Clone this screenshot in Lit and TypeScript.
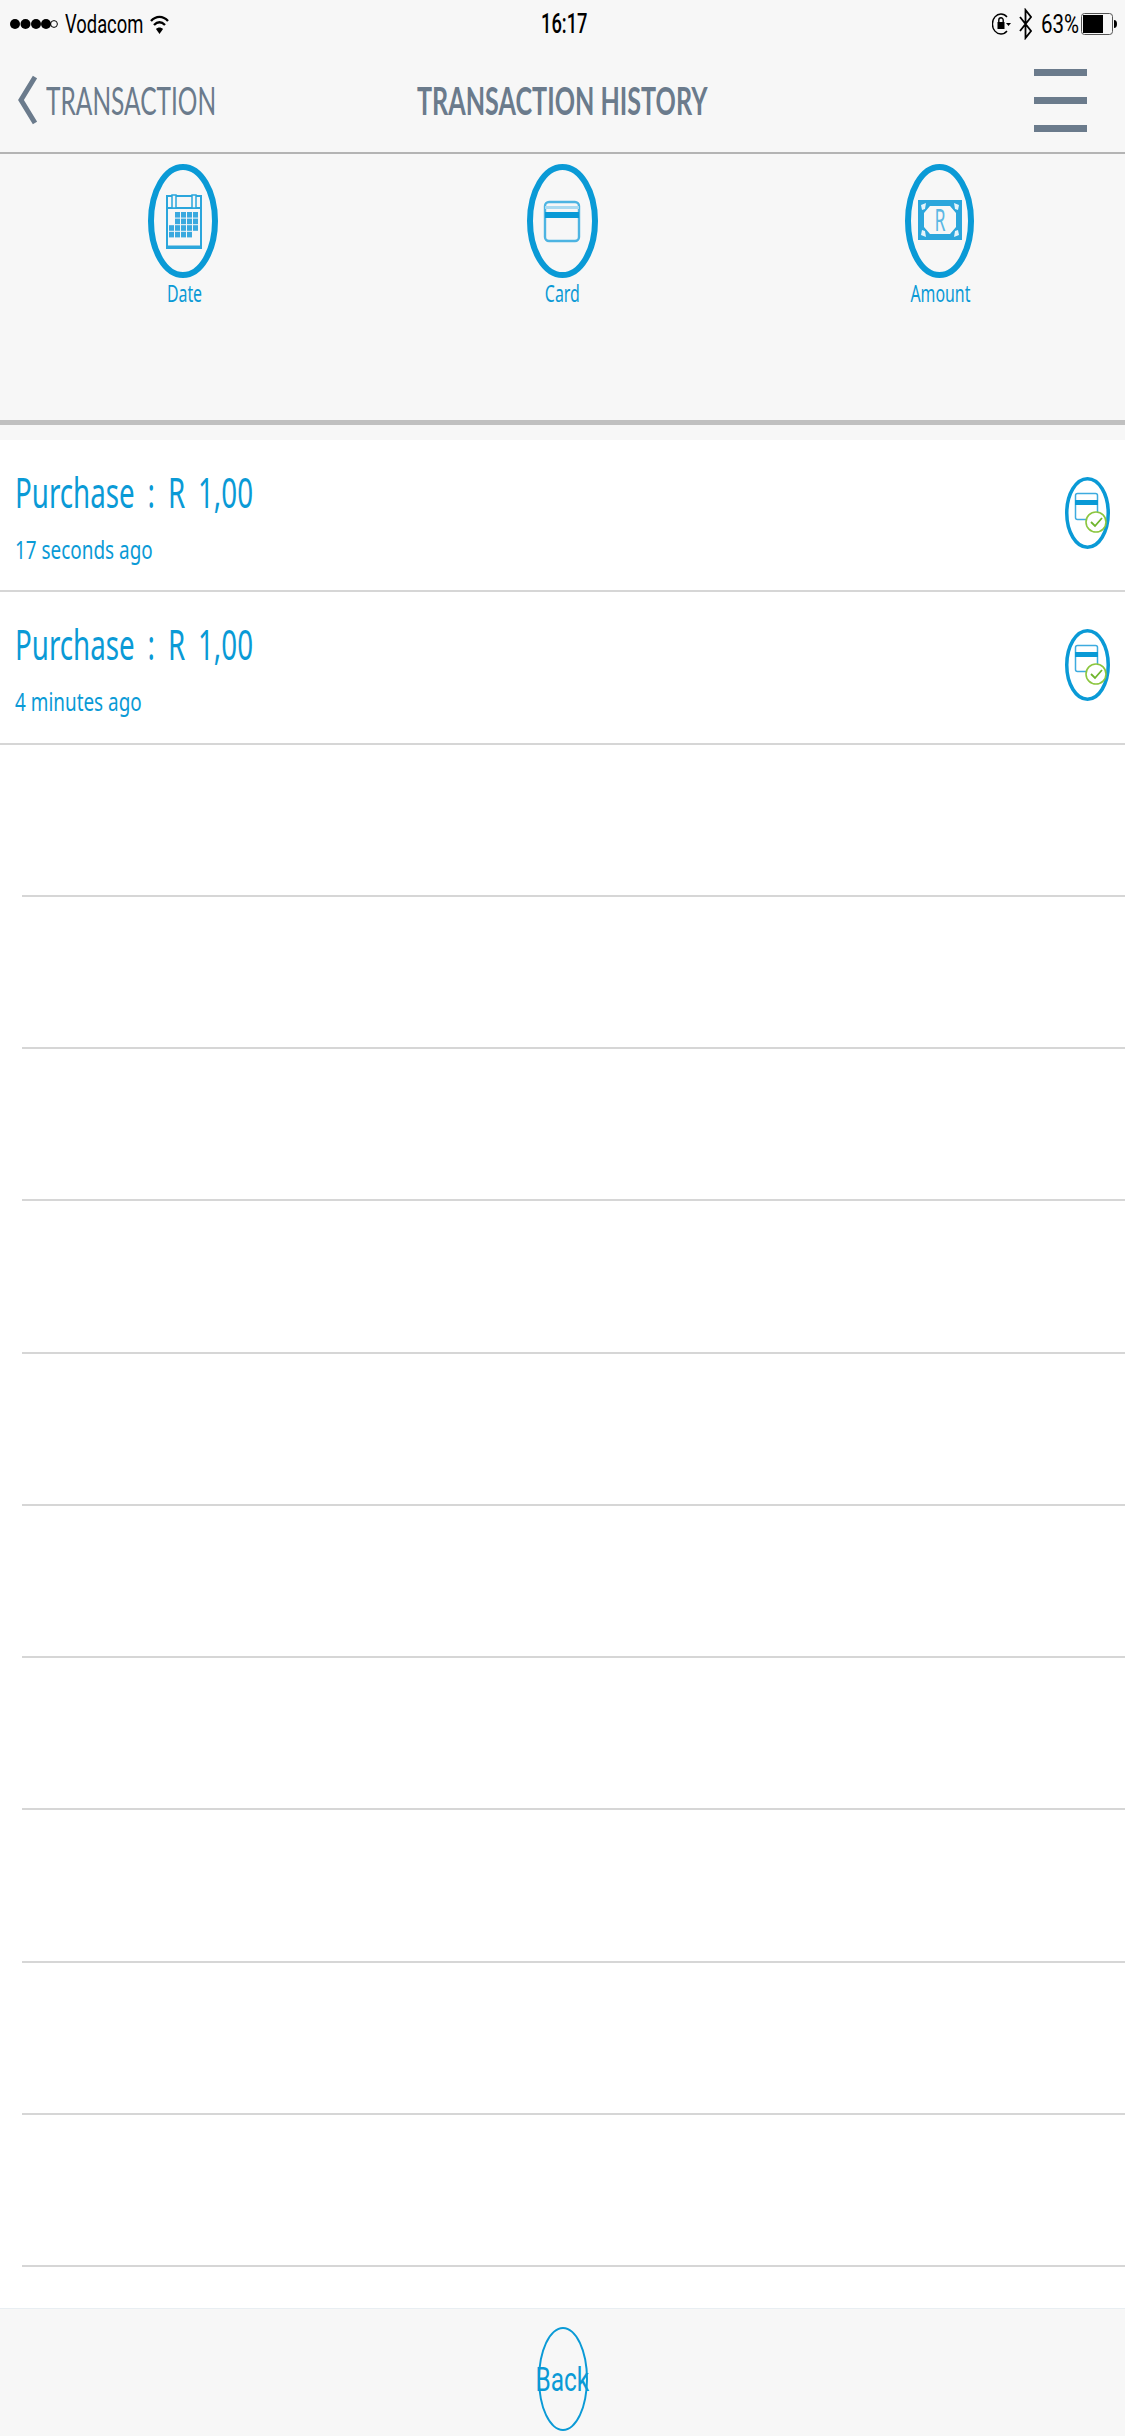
import { LitElement, html, css, svg } from 'lit'
import { customElement } from 'lit/decorators.js'

const ring = (w: number, h: number, sw: number) =>
  svg`<ellipse cx=${w / 2} cy=${h / 2} rx=${w / 2 - sw / 2} ry=${h / 2 - sw / 2} fill="none" stroke="#0a9ad6" stroke-width=${sw}/>`

function calendarIcon() {
  const dots = []
  for (let r = 0; r < 4; r++) {
    for (let c = 0; c < 5; c++) {
      if (r < 2 && c === 0) continue
      if (r === 3 && c === 4) continue
      dots.push(svg`<rect x=${21 + c * 6} y=${48 + r * 6.6} width="5" height="5.6" fill="#3aa9df"/>`)
    }
  }
  return html`<svg class="off" width="70" height="114" viewBox="0 0 70 114">
    ${ring(70, 114, 6)}
    <rect x="19" y="32" width="34" height="52" fill="none" stroke="#2ba6dc" stroke-width="2"/>
    <line x1="19" y1="44" x2="53" y2="44" stroke="#2ba6dc" stroke-width="2"/>
    <line x1="19" y1="83" x2="53" y2="83" stroke="#2ba6dc" stroke-width="3"/>
    <rect x="24" y="31" width="4" height="13" fill="#f7f7f7" stroke="#2ba6dc" stroke-width="1.5"/>
    <rect x="44" y="31" width="4" height="13" fill="#f7f7f7" stroke="#2ba6dc" stroke-width="1.5"/>
    ${dots}
  </svg>`
}

function cardIcon() {
  return html`<svg width="71" height="114" viewBox="0 0 71 114">
    ${ring(71, 114, 6)}
    <rect x="18" y="38" width="34" height="39" rx="4" fill="none" stroke="#4db4e2" stroke-width="2.4"/>
    <rect x="18" y="42" width="34" height="3" fill="#a9daf1"/>
    <rect x="18" y="48" width="34" height="6" fill="#0a9ad6"/>
  </svg>`
}

function amountIcon() {
  return html`<svg class="off" width="69" height="114" viewBox="0 0 69 114">
    ${ring(69, 114, 6)}
    <path fill-rule="evenodd" fill="#2ba6dc" d="M13 36h44v40H13z M25 42h20l6 7v14l-6 7H25l-6-7V49z"/>
    <path fill="#e4f4fb" d="M16 41l5-2-1 6-3 1z M54 41l-5-2 1 6 3 1z M16 71l5 2-1-6-3-1z M54 71l-5 2 1-6 3-1z"/>
    <text x="35" y="67" text-anchor="middle" class="note" textLength="11" lengthAdjust="spacingAndGlyphs">R</text>
  </svg>`
}

function rowIcon() {
  return html`<svg width="45" height="72" viewBox="0 0 45 72">
    ${ring(45, 72, 3.5)}
    <rect x="10.500" y="16.500" width="22" height="26" rx="2" fill="none" stroke="#3dabdf" stroke-width="1.500"/>
    <rect x="10" y="23" width="23" height="5" fill="#0a9ad6"/>
    <circle cx="31" cy="45" r="10" fill="#fff" stroke="#8cc63f" stroke-width="1.600"/>
    <path d="M26 45l4 4 7-8" fill="none" stroke="#6fb52c" stroke-width="1.800"/>
  </svg>`
}

@customElement('app-root')
export class AppRoot extends LitElement {
  static styles = css`
    :host {
      display: flex;
      flex-direction: column;
      width: 1125px;
      height: 2436px;
      overflow: hidden;
      background: #fff;
      font-family: 'Noto Sans', sans-serif;
      color: #0a9ad6;
    }
    .squeeze {
      display: inline-block;
      white-space: nowrap;
      transform-origin: left center;
    }
    .top {
      background: #f7f7f7;
      border-bottom: 2px solid #b4b4b4;
      height: 152px;
      flex: none;
    }
    .status {
      height: 48px;
      padding: 0 8px 0 10px;
      display: grid;
      grid-template-columns: minmax(0, 1fr) auto minmax(0, 1fr);
      align-items: center;
      color: #000;
      font-family: 'Roboto', sans-serif;
      font-size: 25px;
    }
    .status-left, .status-right {
      display: flex;
      align-items: center;
    }
    .status-right { justify-content: flex-end; }
    .carrier { transform: scaleX(0.735); width: 76px; margin-left: 7px; }
    .wifi { margin-left: 9px; }
    .time { transform: scaleX(0.68); transform-origin: center; font-size: 27px; font-weight: 500; margin-left: 1px; }
    .pct { transform: scaleX(0.82); width: 36px; margin-left: 9px; }
    .bt { margin-left: 8px; }
    .batt { margin-left: 4px; }
    .nav {
      display: grid;
      grid-template-columns: minmax(0, 1fr) auto minmax(0, 1fr);
      align-items: center;
      height: 104px;
      padding: 0 38px 8px 38px;
      color: #6b7b8c;
      font-family: 'Lato', sans-serif;
      font-size: 39px;
    }
    .back {
      display: flex;
      align-items: center;
      gap: 9px;
      margin-left: -21px;
    }
    .back .squeeze { transform: scaleX(0.628); }
    .title { transform: scaleX(0.645); transform-origin: center; font-weight: 700; }
    .menu {
      justify-self: end;
      width: 53px;
      display: flex;
      flex-direction: column;
      gap: 21px;
    }
    .menu i {
      display: block;
      height: 7px;
      background: #6b7b8c;
    }
    .tools {
      flex: none;
      height: 256px;
      background: #f7f7f7;
      display: grid;
      grid-template-columns: repeat(3, 378px);
      justify-content: center;
      padding-top: 10px;
      border-bottom: 5px solid #c0c0c0;
    }
    .tool {
      display: flex;
      flex-direction: column;
      align-items: center;
      font-size: 23px;
      line-height: 30px;
    }
    .tool svg { display: block; }
    .tool svg.off { margin-right: 3px; }
    .tool span {
      display: block;
      transform: scaleX(0.69);
    }
    .note {
      font-family: 'Noto Sans', sans-serif;
      font-size: 30px;
      fill: #5bb8e4;
    }
    .gap {
      flex: none;
      height: 15px;
      background: #f7f7f7;
    }
    .list { flex: 1; overflow: hidden; min-height: 0; }
    .row {
      height: 152.25px;
      box-sizing: border-box;
      border-bottom: 2px solid #d6d6d6;
      display: flex;
      align-items: center;
      justify-content: space-between;
      padding: 0 15px 0 15px;
    }
    .row.empty { margin-left: 22px; padding: 0; }
    .row-text { display: flex; flex-direction: column; }
    .amount {
      font-size: 42px;
      line-height: 56px;
      transform: scaleX(0.66);
      word-spacing: 8.6px;
    }
    .when {
      font-size: 26px;
      line-height: 36px;
      margin-top: 11px;
      transform: scaleX(0.727);
    }
    .row svg { display: block; margin-bottom: 4px; }
    .foot {
      flex: none;
      height: 128px;
      background: #f7f7f7;
      border-top: 1px solid #e8eef2;
      display: flex;
      justify-content: center;
      padding-top: 18px;
      box-sizing: border-box;
    }
    .back-btn {
      width: 50px;
      height: 104px;
      box-sizing: border-box;
      border: 2px solid #0a9ad6;
      border-radius: 50%;
      display: flex;
      align-items: center;
      justify-content: center;
      font-family: 'Roboto', sans-serif;
      font-size: 33px;
      background: none;
      color: inherit;
      padding: 0;
      overflow: visible;
    }
    .back-btn span { display: block; transform: scaleX(0.74); }
  `

  rows = [
    { amount: 'Purchase : R 1,00', when: '17 seconds ago' },
    { amount: 'Purchase : R 1,00', when: '4 minutes ago' },
  ]

  render() {
    return html`
      <div class="top">
        <div class="status">
          <div class="status-left">
            <svg width="48" height="14" viewBox="0 0 48 14">
              <circle cx="5" cy="7" r="5"/><circle cx="15.500" cy="7" r="5"/><circle cx="26" cy="7" r="5"/><circle cx="36" cy="7" r="5"/>
              <circle cx="44" cy="7" r="3.400" fill="none" stroke="#000" stroke-width="1"/>
            </svg>
            <span class="squeeze carrier">Vodacom</span>
            <svg class="wifi" width="19" height="21" viewBox="0 0 19 21" fill="none" stroke="#000" stroke-width="2.400">
              <path d="M1 7c5-5.500 12-5.500 17 0"/><path d="M4 11c3.500-3.500 7.500-3.500 11 0"/>
              <path d="M9.500 20l-3.500-5c2-2 5-2 7 0z" fill="#000" stroke="none"/>
            </svg>
          </div>
          <div class="time">16:17</div>
          <div class="status-right">
            <svg width="19" height="24" viewBox="0 0 19 24" fill="none" stroke="#000" stroke-width="1.400">
              <path d="M15 19a8.500 10 0 1 1 0-14"/>
              <rect x="5.500" y="10" width="7" height="7" fill="#000" stroke="none"/>
              <path d="M6.800 10V8a2.200 2.200 0 0 1 4.400 0v2"/>
              <path d="M14 11h5l-2.500 3z" fill="#000" stroke="none"/>
            </svg>
            <svg class="bt" width="13" height="32" viewBox="0 0 13 32" fill="none" stroke="#000" stroke-width="1.800">
              <path d="M1 9l11 14-5.500 7V2L12 9 1 23"/>
            </svg>
            <span class="squeeze pct">63%</span>
            <svg class="batt" width="36" height="22" viewBox="0 0 36 22">
              <rect x="0.500" y="0.500" width="31" height="21" rx="3" fill="none" stroke="#555"/>
              <rect x="2" y="2" width="20" height="18" fill="#000"/>
              <path d="M33 7c2 0 3 1.500 3 4s-1 4-3 4z"/>
            </svg>
          </div>
        </div>
        <div class="nav">
          <div class="back">
            <svg width="20" height="50" viewBox="0 0 20 50" fill="none" stroke="#6b7b8c" stroke-width="5">
              <path d="M18 2L4 25l14 23"/>
            </svg>
            <span class="squeeze">TRANSACTION</span>
          </div>
          <div class="title">TRANSACTION HISTORY</div>
          <div class="menu"><i></i><i></i><i></i></div>
        </div>
      </div>
      <div class="tools">
        <div class="tool">${calendarIcon()}<span>Date</span></div>
        <div class="tool">${cardIcon()}<span>Card</span></div>
        <div class="tool">${amountIcon()}<span>Amount</span></div>
      </div>
      <div class="gap"></div>
      <div class="list">
        ${this.rows.map(
          r => html`<div class="row">
            <div class="row-text">
              <span class="squeeze amount">${r.amount}</span>
              <span class="squeeze when">${r.when}</span>
            </div>
            ${rowIcon()}
          </div>`
        )}
        ${Array.from({ length: 10 }, () => html`<div class="row empty"></div>`)}
      </div>
      <div class="foot">
        <button class="back-btn"><span>Back</span></button>
      </div>
    `
  }
}
